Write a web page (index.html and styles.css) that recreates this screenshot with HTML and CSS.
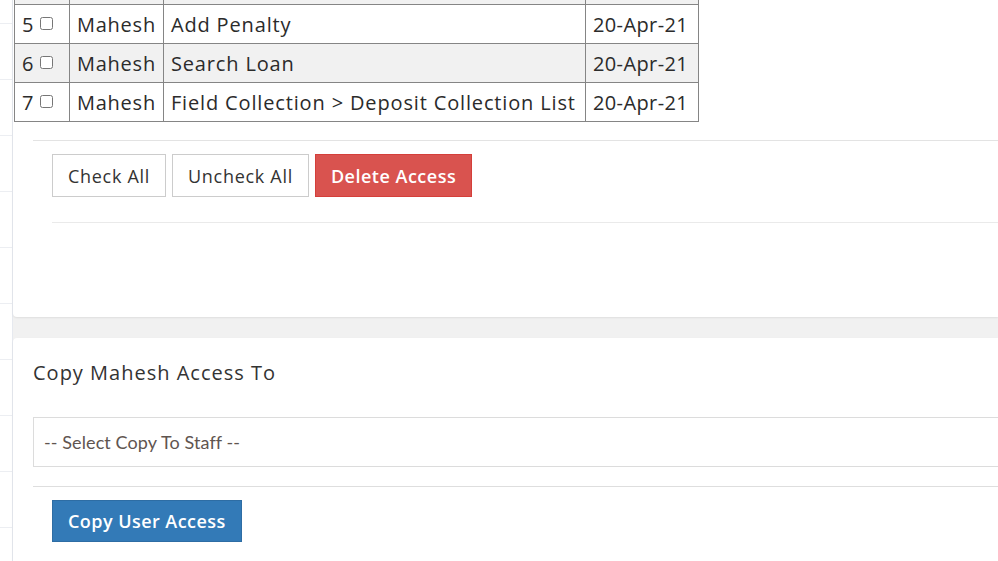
FILE: index.html
```html
<!DOCTYPE html>
<html>
<head>
<meta charset="utf-8">
<link rel="stylesheet" href="styles.css">
</head>
<body>
<div class="layout">
  <aside class="sidebar">
    <div class="side-item first"></div>
    <div class="side-item"></div>
    <div class="side-item"></div>
    <div class="side-item"></div>
    <div class="side-item"></div>
    <div class="side-item"></div>
    <div class="side-item"></div>
    <div class="side-item"></div>
    <div class="side-item"></div>
    <div class="side-item"></div>
    <div class="side-item"></div>
  </aside>
  <main class="main">
    <section class="card card-top">
      <table class="access-table">
        <tbody>
          <tr class="striped"><td class="c-no"></td><td class="c-name"></td><td class="c-page"></td><td class="c-date"></td></tr>
          <tr><td class="c-no">5 <input type="checkbox"></td><td class="c-name">Mahesh</td><td class="c-page">Add Penalty</td><td class="c-date">20-Apr-21</td></tr>
          <tr class="striped"><td class="c-no">6 <input type="checkbox"></td><td class="c-name">Mahesh</td><td class="c-page">Search Loan</td><td class="c-date">20-Apr-21</td></tr>
          <tr><td class="c-no">7 <input type="checkbox"></td><td class="c-name">Mahesh</td><td class="c-page">Field Collection &gt; Deposit Collection List</td><td class="c-date">20-Apr-21</td></tr>
        </tbody>
      </table>
      <div class="card-footer">
        <div class="btn-row">
          <button class="btn btn-default">Check All</button>
          <button class="btn btn-default">Uncheck All</button>
          <button class="btn btn-danger">Delete Access</button>
        </div>
      </div>
    </section>
    <section class="card card-copy">
      <h3 class="copy-title">Copy Mahesh Access To</h3>
      <div class="select-box">-- Select Copy To Staff --</div>
      <div class="copy-footer">
        <button class="btn btn-primary">Copy User Access</button>
      </div>
    </section>
  </main>
</div>
</body>
</html>
```

FILE: styles.css
```css
html, body {
  margin: 0;
  padding: 0;
  background: #f1f1f1;
  overflow: hidden;
}
body {
  font-family: "Open Sans", "Liberation Sans", sans-serif;
  color: #333;
}
.layout {
  display: flex;
  height: 561px;
}
.sidebar {
  width: 12px;
  flex: none;
  background: #fff;
  border-right: 1px solid #e6e9ef;
  overflow: hidden;
}
.side-item {
  height: 55px;
  border-bottom: 1px solid #eceef2;
}
.side-item.first {
  height: 23px;
}
.main {
  flex: 1;
  min-width: 0;
  display: flex;
  flex-direction: column;
  gap: 21px;
}
.card {
  background: #fff;
  box-shadow: 0 1px 2px rgba(0,0,0,0.08);
}
.card-top {
  margin-top: -35px;
  height: 352px;
  border-radius: 0 0 0 4px;
  padding-left: 1px;
  box-sizing: border-box;
}
.access-table {
  border-collapse: collapse;
  font-size: 20px;
  letter-spacing: 0.85px;
  color: #2b2b2b;
}
.access-table td {
  border: 1px solid #858585;
  height: 39px;
  padding: 0 7px;
  white-space: nowrap;
  box-sizing: border-box;
}
.access-table tr.striped td {
  background: #f1f1f1;
}
.c-no { width: 55px; letter-spacing: 0; }
.c-name { width: 93px; letter-spacing: 0.75px; }
.c-page { width: 422px; }
.c-date { width: 113px; letter-spacing: 0.4px; }
.c-no input {
  width: 13px;
  height: 13px;
  margin: 0 0 0 1px;
  vertical-align: 2px;
}
.card-footer {
  margin: 18px 0 0 19px;
  border-top: 1px solid #e3e3e3;
  padding: 13px 0 0 19px;
}
.btn-row {
  display: flex;
  gap: 6px;
  padding-bottom: 25px;
  border-bottom: 1px solid #eaeaea;
}
.btn {
  font-family: "Open Sans", "Liberation Sans", sans-serif;
  font-size: 18px;
  letter-spacing: 0.7px;
  height: 43px;
  padding: 0 15px;
  border: 1px solid #ccc;
  background: #fff;
  color: #333;
  border-radius: 0;
}
.btn-danger {
  background: #d9534f;
  border-color: #d43f3a;
  color: #fff;
  font-weight: 600;
  letter-spacing: 0.5px;
}
.btn-primary {
  height: 42px;
  background: #337ab7;
  border-color: #2e6da4;
  color: #fff;
  font-weight: 600;
  letter-spacing: 0.45px;
}
.card-copy {
  flex: 1;
  border-radius: 4px 0 0 0;
  padding: 0 0 0 20px;
}
.copy-title {
  margin: 23px 0 0;
  font-size: 20px;
  font-weight: 500;
  letter-spacing: 1px;
  color: #333;
  line-height: 24px;
}
.select-box {
  margin-top: 32px;
  height: 50px;
  box-sizing: border-box;
  border: 1px solid #dcdcdc;
  border-right: none;
  padding: 0 10px;
  display: flex;
  align-items: center;
  font-family: "Lato", "Open Sans", sans-serif;
  font-size: 18px;
  letter-spacing: 0.1px;
  color: #5f5550;
}
.copy-footer {
  margin-top: 19px;
  border-top: 1px solid #dedede;
  padding: 13px 0 0 19px;
}
```
